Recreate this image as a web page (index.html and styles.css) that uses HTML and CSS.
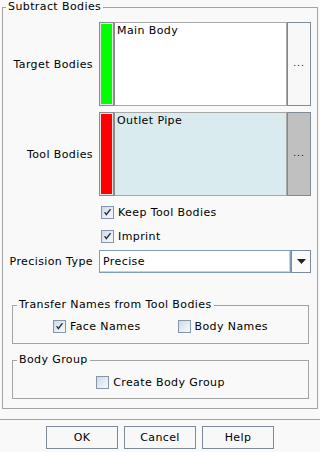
FILE: index.html
```html
<!DOCTYPE html>
<html>
<head>
<meta charset="utf-8">
<link rel="stylesheet" href="styles.css">
</head>
<body>
<div class="dialog">
  <fieldset class="group outer">
    <legend>Subtract Bodies</legend>
    <div class="form">
      <div class="row list-row">
        <div class="label">Target Bodies</div>
        <div class="picker">
          <div class="swatch green"></div>
          <div class="list">Main Body</div>
          <div class="more">...</div>
        </div>
      </div>
      <div class="row list-row gap-top">
        <div class="label">Tool Bodies</div>
        <div class="picker">
          <div class="swatch red"></div>
          <div class="list tool">Outlet Pipe</div>
          <div class="more dark">...</div>
        </div>
      </div>
      <div class="row check-row gap-top">
        <div class="label"></div>
        <label class="check"><span class="box on"><svg viewBox="0 0 11 11" width="11" height="11"><path d="M2 5.2 L4.3 8.8 L9.3 2.2 L7.6 2.2 L4.3 6.6 L3.3 5.0 Z" fill="#1e2a38"/></svg></span>Keep Tool Bodies</label>
      </div>
      <div class="row check-row">
        <div class="label"></div>
        <label class="check"><span class="box on"><svg viewBox="0 0 11 11" width="11" height="11"><path d="M2 5.2 L4.3 8.8 L9.3 2.2 L7.6 2.2 L4.3 6.6 L3.3 5.0 Z" fill="#1e2a38"/></svg></span>Imprint</label>
      </div>
      <div class="row combo-row">
        <div class="label">Precision Type</div>
        <div class="combo">
          <div class="combo-text">Precise</div>
          <div class="combo-btn"><svg viewBox="0 0 9 5" width="9" height="5"><path d="M0 0 H9 L4.5 5 Z" fill="#222"/></svg></div>
        </div>
      </div>
    </div>
    <fieldset class="group sub transfer">
      <legend>Transfer Names from Tool Bodies</legend>
      <div class="checks">
        <label class="check"><span class="box on"><svg viewBox="0 0 11 11" width="11" height="11"><path d="M2 5.2 L4.3 8.8 L9.3 2.2 L7.6 2.2 L4.3 6.6 L3.3 5.0 Z" fill="#1e2a38"/></svg></span>Face Names</label>
        <label class="check"><span class="box"></span>Body Names</label>
      </div>
    </fieldset>
    <fieldset class="group sub bodygroup">
      <legend>Body Group</legend>
      <div class="checks">
        <label class="check"><span class="box"></span>Create Body Group</label>
      </div>
    </fieldset>
  </fieldset>
  <div class="separator"></div>
  <div class="buttons">
    <button class="btn">OK</button>
    <button class="btn">Cancel</button>
    <button class="btn">Help</button>
  </div>
</div>
</body>
</html>
```
FILE: styles.css
```css
* { box-sizing: border-box; }
html, body {
  margin: 0;
  padding: 0;
  background: #f9f9f9;
}
body {
  font-family: "DejaVu Sans", Verdana, sans-serif;
  font-size: 11px;
  letter-spacing: 0.4px;
  color: #000;
  width: 320px;
  height: 452px;
  overflow: hidden;
}
.group {
  border: 1px solid #a3a3a3;
  margin: 0;
  min-width: 0;
}
.group > legend {
  padding: 0 2px;
  line-height: 14px;
  height: 14px;
}
.outer {
  margin: 0 2px;
  padding: 8px 6px 9px 3px;
}
.form {
  display: flex;
  flex-direction: column;
}
.row {
  display: grid;
  grid-template-columns: 87px 1fr;
  column-gap: 6px;
  align-items: center;
}
.label {
  text-align: right;
  white-space: nowrap;
}
.list-row { height: 84px; }
.gap-top { margin-top: 6px; }
.check-row { height: 24px; }
.combo-row { height: 23px; margin-top: 0; }
.picker {
  display: flex;
  height: 84px;
}
.swatch {
  width: 15px;
  border: 1px solid #8c8c8c;
  box-shadow: inset 0 0 0 1px #e4e4e4;
}
.green { background: #00ff00; }
.red { background: #ff0000; }
.list {
  flex: 1;
  background: #fff;
  border: 1px solid #a8a8a8;
  border-left: 1px solid #8c8c8c;
  padding: 1px 2px;
  line-height: 14px;
}
.list.tool { background: #daebef; }
.more {
  width: 24px;
  border: 1px solid #7d8a97;
  background: #f8f8f8;
  display: flex;
  align-items: center;
  justify-content: center;
  letter-spacing: 1px;
  font-size: 9px;
  padding-bottom: 3px;
}
.more.dark { background: #c0c0c0; }
.check {
  display: flex;
  align-items: center;
  gap: 4px;
  white-space: nowrap;
}
.check-row .check { margin-left: 2px; margin-top: -3px; }
.box {
  width: 13px;
  height: 13px;
  border: 1px solid #8596a8;
  background: linear-gradient(135deg, #cfd8e4 0%, #e8eef5 60%, #f6f8fb 100%);
  display: flex;
  align-items: center;
  justify-content: center;
  flex: none;
}
.combo {
  display: flex;
  height: 23px;
}
.combo-text {
  flex: 1;
  background: #fff;
  border: 1px solid #7f9db9;
  box-shadow: inset -1px -1px 0 #c5d4e2;
  padding: 0 3px;
  line-height: 21px;
}
.combo-btn {
  width: 20px;
  border: 1px solid #7d8a97;
  background: #fafafa;
  display: flex;
  align-items: center;
  justify-content: center;
}
.sub {
  margin: 25px 2px 0 6px;
}
.transfer {
  padding: 5px 4px 8px;
}
.bodygroup {
  margin-top: 9px;
  padding: 6px 4px 7px;
}
.checks {
  display: flex;
  justify-content: center;
  gap: 37px;
  height: 18px;
  align-items: center;
}
.separator {
  margin-top: 10px;
  height: 1px;
  background: #a3a3a3;
}
.buttons {
  display: flex;
  justify-content: center;
  gap: 6px;
  margin-top: 6px;
}
.btn {
  width: 72px;
  height: 23px;
  border: 1px solid #7d8a97;
  background: #f8f8f8;
  font-family: "DejaVu Sans", Verdana, sans-serif;
  font-size: 11px;
  letter-spacing: 0.4px;
  color: #000;
  padding: 0;
  border-radius: 0;
}
```
